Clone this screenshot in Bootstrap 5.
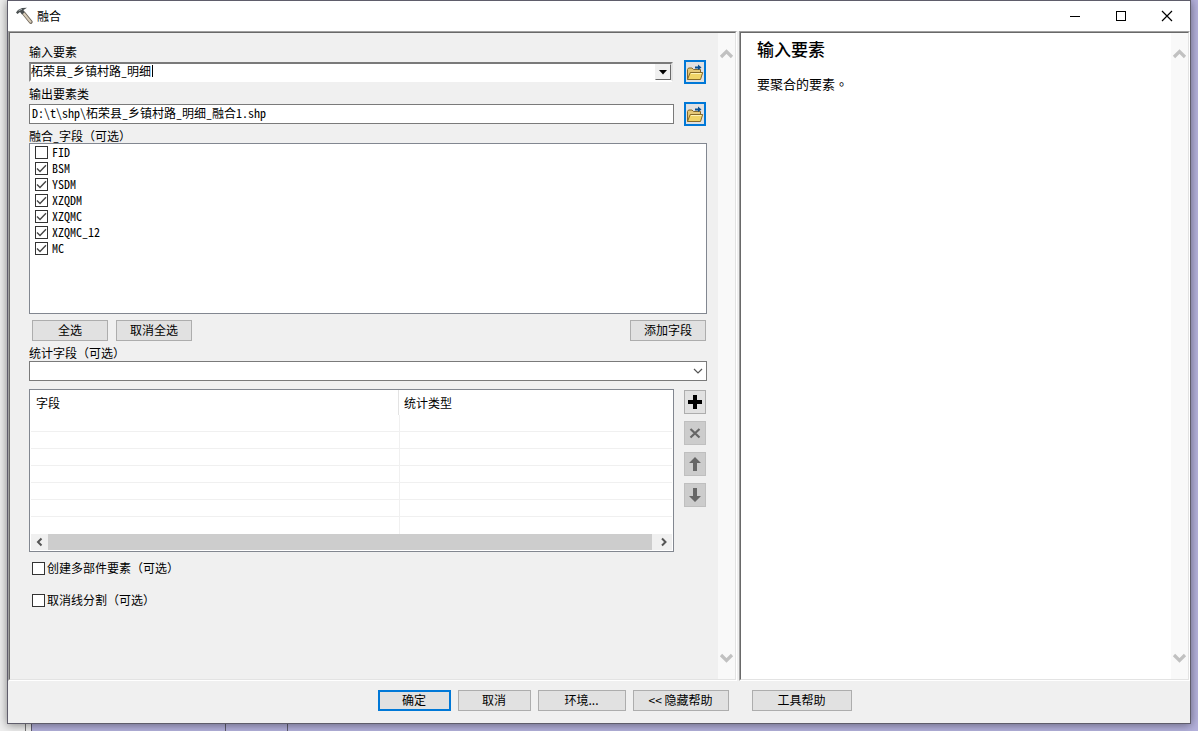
<!DOCTYPE html>
<html lang="zh-CN">
<head>
<meta charset="utf-8">
<meta name="viewport" content="width=device-width, initial-scale=1">
<title>融合</title>
<link href="https://cdn.jsdelivr.net/npm/bootstrap@5.3.0/dist/css/bootstrap.min.css" rel="stylesheet">
<style>
  :root { --ui: "Noto Sans Mono CJK SC", "Noto Sans CJK SC", sans-serif; --face: #f0f0f0; --accent: #0078d7; }
  body { font: 12px/16px var(--ui); color: #000; padding: 0 7px 7px;
    background: linear-gradient(90deg, #eee 25px, #777 25px 26px, #eee 26px 31px, #5f5d6e 31px 32px, #b4b1dc 32px 225px, #5f5d6e 225px 226px, #b4b1dc 226px 287px, #5f5d6e 287px 288px, #b4b1dc 288px); }
  button, input, select { font: inherit; color: inherit; border-radius: 0; }
  .dialog-win { background: var(--face); border: 1px solid #5f5d6b; box-shadow: 0 1px 9px rgba(0,0,0,.45); }
  .title-bar { height: 30px; background: #fff; padding-left: 8px; }
  .title-text { font: 12px/16px "Noto Sans CJK SC", sans-serif; }
  .caption-btn { width: 46px; height: 30px; border: 0; background: none; padding: 0; }
  .sunken { border: 1px solid; border-color: #a0a0a0 #fff #fff #a0a0a0; }
  .sunken-in { border: 1px solid; border-color: #696969 #e3e3e3 #e3e3e3 #696969; }
  .panes { gap: 2px; }
  .form-side { min-width: 0; }
  .help-side { flex: 0 0 451px; }
  .help-side .sunken-in { background: #fff; }
  .v-scroll { width: 17px; background: #f9f9f9; padding: 14px 0; }
  .form-area { padding: 11px 11px 0 19px; min-width: 0; }
  .field-label { display: block; line-height: 16px; }
  .list-label { line-height: 15px; }
  .file-row { height: 24px; margin-bottom: 2px; }
  .box20 { height: 20px; background: #fff; border: 1px solid #7a7a7a; padding: 0 2px 3px; min-width: 0; }
  .combo { height: 20px; margin-right: 1px; background: #fff; border: 2px solid; border-color: #7a7a7a #e3e3e3 #fff #8c8c8c; min-width: 0; }
  .combo input { border: 0; padding: 0 0 2px; min-width: 0; outline: 0; height: 16px; }
  .caret-mark { position: absolute; left: 121px; top: 1px; width: 1px; height: 12px; background: #000; }
  .drop-btn { width: 16px; border: 1px solid; border-color: #f0f0f0 #696969 #696969 #f0f0f0; background: var(--face); padding: 0; }
  .tool-btn { width: 22px; height: 24px; padding: 0; border: 1px solid #adadad; background: #e1e1e1; }
  .tool-btn:disabled { background: #ccc; border-color: #bfbfbf; }
  .pick-btn { border: 2px solid var(--accent); }
  .side-col { width: 22px; margin: 0 1px 0 10px; flex: none; }
  .side-stack { gap: 7px; padding-top: 1px; }
  .list-area { height: 171px; border: 1px solid #828790; background: #fff; padding: 0 5px; margin-bottom: 6px; }
  .tick-row { height: 16px; }
  .tick { appearance: none; width: 13px; height: 13px; margin: 0; border: 1px solid #333; background: #fff; flex: none; }
  .tick:checked { background: #fff url("data:image/svg+xml,%3Csvg xmlns='http://www.w3.org/2000/svg' viewBox='0 0 11 11'%3E%3Cpath d='M1 5.5 4 8.5 10 2.2' fill='none' stroke='%23444' stroke-width='1.4'/%3E%3C/svg%3E"); }
  .optional { gap: 2px; padding-left: 3px; }
  .push-row { padding: 0 1px 0 3px; }
  .push { height: 21px; min-width: 76px; padding: 0 0 2px; border: 1px solid #adadad; background: #e1e1e1; line-height: 16px; }
  .push-default { border: 2px solid var(--accent); }
  .stat-select { appearance: none; outline: 0; }
  .chev { position: absolute; right: 4px; top: 7px; pointer-events: none; }
  .grid-area { height: 163px; border: 1px solid #828790; background: #fff; padding: 0 1px; min-width: 0; }
  .stat-table { table-layout: fixed; width: 100%; border-collapse: separate; border-spacing: 0; }
  .stat-table th { height: 25px; font-weight: 400; padding: 0 5px; }
  .stat-table th:first-child { border-right: 1px solid #e3e3e3; width: 57.4%; }
  .stat-table td { height: 17px; padding: 0; border-bottom: 1px solid #f0f0f0; }
  .stat-table td + td { border-left: 1px solid #f0f0f0; }
  .stat-table tr:last-child td { border-bottom: 0; }
  .h-scroll { height: 16px; background: var(--face); }
  .h-scroll svg { flex: none; }
  .thumb { background: #cdcdcd; margin-right: 3px; }
  .help-text { padding: 6px 16px; font-family: "Noto Sans CJK SC", sans-serif; font-size: 13px; line-height: 18px; }
  .help-text h1 { font-size: 17px; line-height: 20px; font-weight: 500; margin: 0 0 16px; }
  .mid-stop { font-family: "Noto Sans CJK TC", sans-serif; }
  .foot { height: 42px; gap: 7px; padding: 0 0 3px 31px; font-family: "Noto Sans CJK SC", sans-serif; }
  .foot .push { width: 73px; min-width: 0; }
  .foot .w-env { width: 88px; }
  .foot .w-hide { width: 96px; }
  .foot .w-help { width: 100px; margin-left: 16px; }
</style>
</head>
<body class="min-vh-100 d-flex flex-column">
<svg class="d-none">
  <symbol id="folder" viewBox="0 0 18 20">
    <path d="M1.500 17.500V7.500l1-1.500h3.500l1.500 1.500h7v3" fill="#e5c878" stroke="#85692a"/>
    <path d="M1.500 17.500 4.200 10.500H16.700L14.500 17.500Z" fill="#f0d468" stroke="#85692a"/>
    <path d="M5 11.500H15.500" stroke="#fff3b8"/>
    <path d="M9 6.500V4.500H12V2.500L15.500 5.500 12 8V6.500Z" fill="#0b4f8f"/>
  </symbol>
  <symbol id="up" viewBox="0 0 17 14"><path d="M3 10 8.500 4.500l5.500 5.500" fill="none" stroke="#c1c1c1" stroke-width="3.200"/></symbol>
  <symbol id="down" viewBox="0 0 17 14"><path d="M3 4 8.500 9.500l5.500-5.500" fill="none" stroke="#c1c1c1" stroke-width="3.200"/></symbol>
</svg>

<div class="dialog-win flex-grow-1 d-flex flex-column">
  <header class="title-bar d-flex align-items-center">
    <svg width="17" height="18" viewBox="0 0 17 18" class="me-1">
      <path d="M7.500 6 14.800 15" stroke="#6f675c" stroke-width="3.600" stroke-linecap="round"/>
      <path d="M7 5.500 14.600 14.800" stroke="#d8cdb9" stroke-width="2" stroke-linecap="round"/>
      <path d="M0 5.500 2 3 6 1 11 .8 7.500 3 8.500 5.500 6 7.500 4 5 1.500 7Z" fill="#4a4f50"/>
      <path d="M2.500 3.800 6 2.200" stroke="#a4abad"/>
    </svg>
    <span class="title-text me-auto">融合</span>
    <button class="caption-btn" aria-label="最小化"><svg width="12" height="12" class="d-block mx-auto"><path d="M1 6.500H11" stroke="#000"/></svg></button>
    <button class="caption-btn" aria-label="最大化"><svg width="12" height="12" class="d-block mx-auto"><rect x="1.500" y="1.500" width="9" height="9" fill="none" stroke="#000"/></svg></button>
    <button class="caption-btn" aria-label="关闭"><svg width="12" height="12" class="d-block mx-auto"><path d="M1 1 11 11M11 1 1 11" stroke="#000" stroke-width="1.200"/></svg></button>
  </header>

  <div class="panes flex-grow-1 d-flex">
    <main class="form-side sunken flex-grow-1 d-flex">
      <div class="sunken-in flex-grow-1 d-flex w-100">
        <form class="form-area flex-grow-1">
          <label class="field-label" for="inFeat">输入要素</label>
          <div class="file-row d-flex align-items-center">
            <div class="combo flex-grow-1 d-flex position-relative">
              <input id="inFeat" class="flex-grow-1" type="text" value="柘荣县_乡镇村路_明细">
              <span class="caret-mark"></span>
              <button type="button" class="drop-btn" aria-label="展开"><svg width="8" height="5" class="d-block mx-auto"><path d="M0 0H8L4 4.500Z"/></svg></button>
            </div>
            <div class="side-col"><button type="button" class="tool-btn pick-btn d-block" aria-label="浏览输入"><svg width="18" height="20" class="d-block"><use href="#folder"/></svg></button></div>
          </div>
          <label class="field-label" for="outFeat">输出要素类</label>
          <div class="file-row d-flex align-items-center">
            <input id="outFeat" class="box20 flex-grow-1" type="text" value="D:\t\shp\柘荣县_乡镇村路_明细_融合1.shp">
            <div class="side-col"><button type="button" class="tool-btn pick-btn d-block" aria-label="浏览输出"><svg width="18" height="20" class="d-block"><use href="#folder"/></svg></button></div>
          </div>
          <div class="field-label list-label">融合_字段（可选）</div>
          <div class="list-area">
            <label class="tick-row d-flex align-items-center gap-1"><input class="tick" type="checkbox">FID</label>
            <label class="tick-row d-flex align-items-center gap-1"><input class="tick" type="checkbox" checked>BSM</label>
            <label class="tick-row d-flex align-items-center gap-1"><input class="tick" type="checkbox" checked>YSDM</label>
            <label class="tick-row d-flex align-items-center gap-1"><input class="tick" type="checkbox" checked>XZQDM</label>
            <label class="tick-row d-flex align-items-center gap-1"><input class="tick" type="checkbox" checked>XZQMC</label>
            <label class="tick-row d-flex align-items-center gap-1"><input class="tick" type="checkbox" checked>XZQMC_12</label>
            <label class="tick-row d-flex align-items-center gap-1"><input class="tick" type="checkbox" checked>MC</label>
          </div>
          <div class="push-row d-flex gap-2 mb-1">
            <button type="button" class="push">全选</button>
            <button type="button" class="push">取消全选</button>
            <button type="button" class="push ms-auto">添加字段</button>
          </div>
          <label class="field-label" for="statField">统计字段（可选）</label>
          <div class="position-relative mb-2">
            <select id="statField" class="box20 stat-select d-block w-100"><option></option></select>
            <svg class="chev" width="10" height="6"><path d="M1 1 5 5 9 1" fill="none" stroke="#555" stroke-width="1.200"/></svg>
          </div>
          <div class="d-flex mb-2">
            <div class="grid-area flex-grow-1">
              <table class="stat-table">
                <thead><tr><th>字段</th><th>统计类型</th></tr></thead>
                <tbody>
                  <tr><td></td><td></td></tr><tr><td></td><td></td></tr><tr><td></td><td></td></tr>
                  <tr><td></td><td></td></tr><tr><td></td><td></td></tr><tr><td></td><td></td></tr>
                  <tr><td></td><td></td></tr>
                </tbody>
              </table>
              <div class="h-scroll d-flex">
                <svg width="17" height="16"><path d="M10.500 4.500 7 8l3.500 3.500" fill="none" stroke="#555" stroke-width="2"/></svg>
                <div class="thumb flex-grow-1"></div>
                <svg width="17" height="16"><path d="M7 4.500 10.500 8 7 11.500" fill="none" stroke="#555" stroke-width="2"/></svg>
              </div>
            </div>
            <div class="side-col side-stack d-flex flex-column">
              <button type="button" class="tool-btn" aria-label="添加"><svg width="20" height="22" class="d-block"><path d="M8 4h4v5h5v4h-5v5H8v-5H3V9h5Z"/></svg></button>
              <button type="button" class="tool-btn" aria-label="删除" disabled><svg width="20" height="22" class="d-block"><path d="M5.500 7 14.500 15.500M14.500 7 5.500 15.500" stroke="#666" stroke-width="2.200"/></svg></button>
              <button type="button" class="tool-btn" aria-label="上移" disabled><svg width="20" height="22" class="d-block"><path d="M10 4 16 10H12v8H8V10H4Z" fill="#666"/></svg></button>
              <button type="button" class="tool-btn" aria-label="下移" disabled><svg width="20" height="22" class="d-block"><path d="M10 18 16 12H12V4H8v8H4Z" fill="#666"/></svg></button>
            </div>
          </div>
          <label class="optional tick-row d-flex align-items-center mb-3"><input class="tick" type="checkbox">创建多部件要素（可选）</label>
          <label class="optional tick-row d-flex align-items-center"><input class="tick" type="checkbox">取消线分割（可选）</label>
        </form>
        <div class="v-scroll flex-shrink-0 d-flex flex-column justify-content-between">
          <svg width="17" height="14"><use href="#up"/></svg>
          <svg width="17" height="14"><use href="#down"/></svg>
        </div>
      </div>
    </main>
    <aside class="help-side sunken d-flex">
      <div class="sunken-in flex-grow-1 d-flex">
        <div class="help-text flex-grow-1">
          <h1>输入要素</h1>
          <p class="m-0">要聚合的要素<span class="mid-stop" lang="zh-TW">。</span></p>
        </div>
        <div class="v-scroll flex-shrink-0 d-flex flex-column justify-content-between">
          <svg width="17" height="14"><use href="#up"/></svg>
          <svg width="17" height="14"><use href="#down"/></svg>
        </div>
      </div>
    </aside>
  </div>

  <footer class="foot d-flex justify-content-center align-items-center">
    <button class="push push-default">确定</button>
    <button class="push">取消</button>
    <button class="push w-env">环境...</button>
    <button class="push w-hide">&lt;&lt; 隐藏帮助</button>
    <button class="push w-help">工具帮助</button>
  </footer>
</div>
<script src="https://cdn.jsdelivr.net/npm/bootstrap@5.3.0/dist/js/bootstrap.bundle.min.js"></script>
</body>
</html>
